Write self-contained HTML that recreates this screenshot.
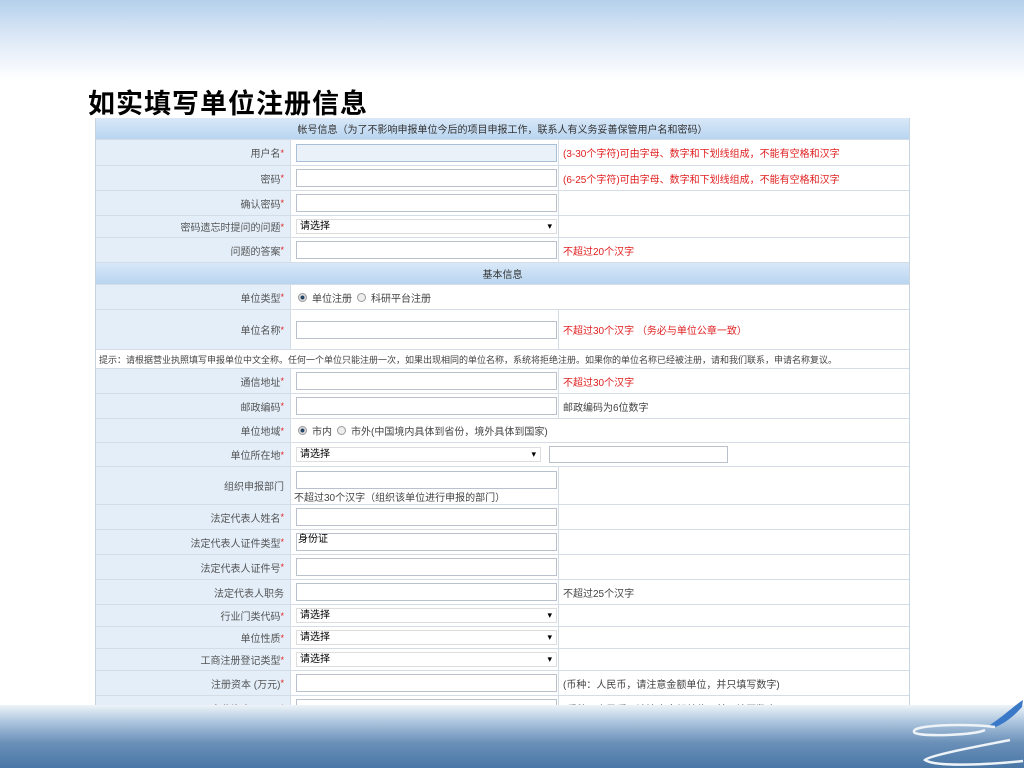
<!DOCTYPE html>
<html><head><meta charset="utf-8"><style>
*{margin:0;padding:0;box-sizing:border-box}
body{width:1024px;height:768px;position:relative;overflow:hidden;background:#fff;font-family:"Liberation Sans","Noto Sans CJK SC",sans-serif;font-size:10px;color:#333}
.sky{position:absolute;left:0;top:0;width:1024px;height:80px;background:linear-gradient(#b5d0ec,#dfeaf7 50%,#fff)}
h1{position:absolute;left:88px;top:82px;font-size:27px;font-weight:bold;color:#000;font-family:"Noto Sans CJK SC",sans-serif;letter-spacing:1px;white-space:nowrap}
.tb{position:absolute;left:95px;top:118px;width:815px;height:590px;background:#fff;border-left:1px solid #c8d4e0;border-right:1px solid #c8d4e0;overflow:hidden}
.r{position:absolute;left:0;width:813px;border-bottom:1px solid #d4dde6}
.l{position:absolute;left:0;top:0;bottom:0;width:195px;background:#e3eef9;border-right:1px solid #d4dde6;text-align:right;padding-right:6px;display:flex;align-items:center;justify-content:flex-end;color:#555}
.m{position:absolute;left:196px;top:0;bottom:0;width:267px;border-right:1px solid #d4dde6}
.x{position:absolute;left:467px;top:0;bottom:0;display:flex;align-items:center;color:#444;white-space:nowrap}
.red{color:#e02020}
.s{color:#e02020;font-size:9px}
.in{position:absolute;left:4px;width:261px;height:18px;border:1px solid #b9c2cc;background:#fff;top:50%;margin-top:-9px}
.sel{position:absolute;left:4px;width:261px;height:15px;border:1px solid #ddd;background:#fff;top:50%;margin-top:-8px;font-size:10px;color:#000;padding-left:3px;line-height:13px}
.sel:after{content:"▾";position:absolute;right:4px;top:0;font-size:9px}
.hd{background:linear-gradient(#d8e8f8,#b9d5f0);text-align:center;color:#333;display:flex;align-items:center;justify-content:center}
.rad{display:flex;align-items:center;height:100%;padding-left:6px;color:#444;gap:5px}
.o{width:9px;height:9px;border-radius:50%;border:1px solid #999;background:#eee;display:inline-block}
.o.on{background:radial-gradient(#246 35%,#ddd 45%)}
.sea{position:absolute;left:0;top:705px;width:1024px;height:63px;background:linear-gradient(#eef3f8,#b0c8e0 25%,#6a90b8 60%,#4a77a6)}
</style></head><body>
<div class="sky"></div>
<h1>如实填写单位注册信息</h1>
<div class="tb">
<div class="r hd" style="top:0;height:22px">帐号信息（为了不影响申报单位今后的项目申报工作，联系人有义务妥善保管用户名和密码）</div>
<div class="r" style="top:22px;height:26px"><div class="l">用户名<span class="s">*</span></div><div class="m"><div class="in" style="background:#eaf1f8;border-color:#a9bfd6"></div></div><div class="x red">(3-30个字符)可由字母、数字和下划线组成，不能有空格和汉字</div></div>
<div class="r" style="top:48px;height:25px"><div class="l">密码<span class="s">*</span></div><div class="m"><div class="in"></div></div><div class="x red">(6-25个字符)可由字母、数字和下划线组成，不能有空格和汉字</div></div>
<div class="r" style="top:73px;height:25px"><div class="l">确认密码<span class="s">*</span></div><div class="m"><div class="in"></div></div></div>
<div class="r" style="top:98px;height:22px"><div class="l">密码遗忘时提问的问题<span class="s">*</span></div><div class="m"><div class="sel">请选择</div></div></div>
<div class="r" style="top:120px;height:25px"><div class="l">问题的答案<span class="s">*</span></div><div class="m"><div class="in"></div></div><div class="x red">不超过20个汉字</div></div>
<div class="r hd" style="top:145px;height:22px">基本信息</div>
<div class="r" style="top:167px;height:25px"><div class="l">单位类型<span class="s">*</span></div><div class="m" style="border:0;width:500px"><div class="rad"><i class="o on"></i>单位注册 <i class="o"></i>科研平台注册</div></div></div>
<div class="r" style="top:192px;height:40px"><div class="l">单位名称<span class="s">*</span></div><div class="m"><div class="in"></div></div><div class="x red">不超过30个汉字 （务必与单位公章一致）</div></div>
<div class="r" style="top:232px;height:19px;display:flex;align-items:center;padding-left:3px;color:#444;font-size:9px;white-space:nowrap;overflow:hidden">提示：请根据营业执照填写申报单位中文全称。任何一个单位只能注册一次，如果出现相同的单位名称，系统将拒绝注册。如果你的单位名称已经被注册，请和我们联系，申请名称复议。</div>
<div class="r" style="top:251px;height:25px"><div class="l">通信地址<span class="s">*</span></div><div class="m"><div class="in"></div></div><div class="x red">不超过30个汉字</div></div>
<div class="r" style="top:276px;height:25px"><div class="l">邮政编码<span class="s">*</span></div><div class="m"><div class="in"></div></div><div class="x">邮政编码为6位数字</div></div>
<div class="r" style="top:301px;height:24px"><div class="l">单位地域<span class="s">*</span></div><div class="m" style="border:0;width:500px"><div class="rad"><i class="o on"></i>市内 <i class="o"></i>市外(中国境内具体到省份，境外具体到国家)</div></div></div>
<div class="r" style="top:325px;height:24px"><div class="l">单位所在地<span class="s">*</span></div><div class="m" style="border:0"><div class="sel" style="width:245px">请选择</div></div><div style="position:absolute;left:453px;top:3px;width:179px;height:17px;border:1px solid #b9c2cc"></div></div>
<div class="r" style="top:349px;height:38px"><div class="l">组织申报部门</div><div class="m"><div class="in" style="top:4px;margin-top:0"></div><div style="position:absolute;left:2px;top:22px;color:#444;white-space:nowrap">不超过30个汉字（组织该单位进行申报的部门）</div></div></div>
<div class="r" style="top:387px;height:25px"><div class="l">法定代表人姓名<span class="s">*</span></div><div class="m"><div class="in"></div></div></div>
<div class="r" style="top:412px;height:25px"><div class="l">法定代表人证件类型<span class="s">*</span></div><div class="m"><div class="in" style="color:#000;padding-left:1px;line-height:12px">身份证</div></div></div>
<div class="r" style="top:437px;height:25px"><div class="l">法定代表人证件号<span class="s">*</span></div><div class="m"><div class="in"></div></div></div>
<div class="r" style="top:462px;height:25px"><div class="l">法定代表人职务</div><div class="m"><div class="in"></div></div><div class="x">不超过25个汉字</div></div>
<div class="r" style="top:487px;height:22px"><div class="l">行业门类代码<span class="s">*</span></div><div class="m"><div class="sel">请选择</div></div></div>
<div class="r" style="top:509px;height:22px"><div class="l">单位性质<span class="s">*</span></div><div class="m"><div class="sel">请选择</div></div></div>
<div class="r" style="top:531px;height:22px"><div class="l">工商注册登记类型<span class="s">*</span></div><div class="m"><div class="sel">请选择</div></div></div>
<div class="r" style="top:553px;height:25px"><div class="l">注册资本 (万元)<span class="s">*</span></div><div class="m"><div class="in"></div></div><div class="x">(币种：人民币，请注意金额单位，并只填写数字)</div></div>
<div class="r" style="top:578px;height:25px"><div class="l">实收资本 (万元)<span class="s">*</span></div><div class="m"><div class="in"></div></div><div class="x">(币种：人民币，请注意金额单位，并只填写数字)</div></div>
</div>
<div class="sea"></div>
<svg style="position:absolute;left:895px;top:695px" width="129" height="73" viewBox="0 0 129 73">
<path d="M95 30 C110 20 120 10 128 5 L127 12 C118 22 108 30 97 33 Z" fill="#3a78c8"/>
<path d="M100 32 C70 28 10 30 20 38 C30 42 80 40 90 35" fill="none" stroke="#eef3f8" stroke-width="2.5"/>
<path d="M115 45 C90 50 35 60 30 65 C40 72 90 70 128 66" fill="none" stroke="#eef3f8" stroke-width="2.5"/>
</svg>
</body></html>
